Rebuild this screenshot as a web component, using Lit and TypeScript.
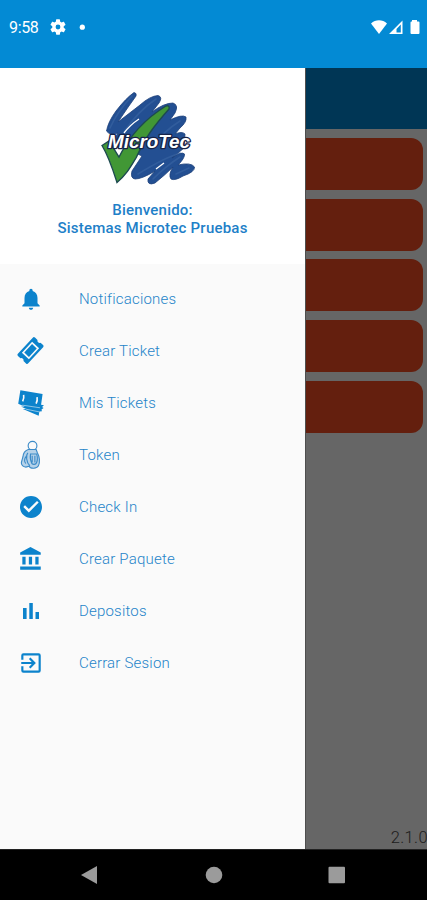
import { LitElement, html, css, svg } from "lit";
import { customElement } from "lit/decorators.js";

const icons = {
  bell: svg`<path d="M12 22c1.100 0 2-.9 2-2h-4c0 1.100.9 2 2 2zm6-6v-5c0-3.070-1.640-5.640-4.500-6.320V4c0-.83-.67-1.500-1.500-1.500s-1.500.67-1.500 1.500v.68C7.630 5.360 6 7.920 6 11v5l-2 2v1h16v-1l-2-2z"/>`,
  ticket: svg`<g transform="rotate(-47 12 12)"><path fill-rule="evenodd" d="M1.500 5.200h21a1.500 1.500 0 0 1 1.500 1.500V10a2.200 2.200 0 0 0 0 4v3.300a1.500 1.500 0 0 1-1.500 1.500h-21A1.500 1.500 0 0 1 0 17.300V14a2.200 2.200 0 0 0 0-4V6.700a1.500 1.500 0 0 1 1.500-1.500zM4.800 7.400v9.200h14.400V7.400z"/><path d="M6.500 8.900h11v6.200h-11z"/></g>`,
  tickets: svg`<path d="M2.200.3 22.700 3.600 21.300 13.600l2.700.4-1.800 1.700 1.400.9-1.900 1.400.4 1.600-2.400.2-.6 4L4.500 17.500l3 .1-4.700-2.300 3.500.1L.2 12.800z"/><path d="M5.200 4.500Q5.800 7.500 4.300 10.500M17.600 6.500Q18.200 9.500 16.700 12.500" fill="none" stroke="#fafafa" stroke-width="1.500"/><path d="M4 14 20.300 16.400M7 17.600l12.500 2.600" fill="none" stroke="#fafafa" stroke-width=".5"/>`,
  token: svg`<g fill="none" stroke="#3c8bc8" stroke-width="1"><circle cx="13.800" cy="4.200" r="3.900"/><path d="M10 7.500C7 8.500 5.500 11 5.300 14L3.900 19c-.3 2.400 1.500 4 4 4.200l2.900-.8c1 2.500 7 2.400 8.300-.5 1.400-3 1.100-8-1-11.500L17 7.500z" fill="#b5d2e9"/><path d="M9.700 10.500c-2 2-1.500 8.500 1.700 11.500M8.300 13.500c-2 2.200-2 5.500-.4 6.500M12 11.500h5.500c.8 3.200.8 6.500-.5 8.500-1 1-2.800 1-3.800 0-1.400-2.600-1.600-5.800-1.200-8.500zM13.500 13v6m2.400-6v6"/></g>`,
  check: svg`<path d="M12 1C5.900 1 1 5.900 1 12s4.900 11 11 11 11-4.900 11-11S18.100 1 12 1zm-2.200 16.500-5.500-5.500 1.700-1.700 3.800 3.800 8.200-8.200 1.700 1.700z"/>`,
  bank: svg`<path d="M4 10v7h3v-7H4zm6 0v7h3v-7h-3zM2 22h19v-3H2v3zm14-12v7h3v-7h-3zm-4.500-9L2 6v2h19V6l-9.500-5z"/>`,
  bars: svg`<path d="M4 9h3.600v11H4zm6.300-5h3.500v16h-3.500zm6.200 9H20v7h-3.500z"/>`,
  exit: svg`<path d="M10.090 15.590 11.500 17l5-5-5-5-1.410 1.410L12.670 11H3v2h9.670l-2.580 2.590zM19 3H5a2 2 0 0 0-2 2v4h2V5h14v14H5v-4H3v4a2 2 0 0 0 2 2h14a2 2 0 0 0 2-2V5a2 2 0 0 0-2-2z"/>`,
};

const menu = [
  { label: "Notificaciones", icon: icons.bell, size: 26 },
  { label: "Crear Ticket", icon: icons.ticket, size: 25 },
  { label: "Mis Tickets", icon: icons.tickets, size: 26 },
  { label: "Token", icon: icons.token, size: 27 },
  { label: "Check In", icon: icons.check, size: 24 },
  { label: "Crear Paquete", icon: icons.bank, size: 26 },
  { label: "Depositos", icon: icons.bars, size: 24 },
  { label: "Cerrar Sesion", icon: icons.exit, size: 26 },
];

@customElement("app-logo")
class AppLogo extends LitElement {
  static styles = css`
    :host { display: block; width: 120px; height: 105px; }
    svg { display: block; }
    .word { font: italic 900 18px "Liberation Sans", Arial, sans-serif; }
  `;
  render() {
    return html`<svg width="120" height="105" viewBox="0 0 120 105">
      <path fill="#234f92" stroke="#1c3f78" stroke-width=".8" stroke-linejoin="round"
        d="M44 7.500Q47 8 46 11Q38 22 28 37L50 20Q60 11 68 10.500Q73 12 69 18L62 27Q74 18 83 18Q89 20 85 28L80 35Q92 29 96 32Q97 37 90 43L85 49Q92 46 95 49L94 63 82 73Q91 66 94.500 69Q95 73 88 80Q101 77 104.500 82Q105 87 93 91Q85 96 81 94Q78 90 83 82Q75 90 65 98Q57 101 58 94L65 86Q52 94 45 94Q40 93 42 86L52 71 22 57 28 48Q20 51 16.500 46Q18 37 26 26Q36 13 44 7.500Z"/>
      <g fill="none" stroke="#3a66a3" stroke-width="1.600" stroke-linecap="round" opacity=".6">
        <path d="M42 11Q27 27 20 43M66 14Q48 26 34 47M79 22Q58 36 43 56M90 36Q74 46 62 62M90 68Q74 73 48 89M90 72Q76 81 63 94M99 83 86 89"/>
      </g>
      <path fill="none" stroke="#fff" stroke-width="1.300" d="M34 48Q40 40 49 34M66 84 74 78"/>
      <path d="M12 60.500 19 56 29 72C39 52 53 35 76 21Q80 20 79 24C64 41 54 54 46 73 40 83 36 90 27 97.500C23 85 19 72 12 60.500Z" fill="#419735" stroke="#1d4a50" stroke-width="1.400"/>
      <text class="word" x="18" y="62.500" textLength="82" lengthAdjust="spacingAndGlyphs"
        fill="#fff" stroke="#182347" stroke-width="2.600" paint-order="stroke" stroke-linejoin="round">MicroTec</text>
    </svg>`;
  }
}

@customElement("app-root")
class AppRoot extends LitElement {
  static styles = css`
    * { box-sizing: border-box; }
    :host {
      display: flex; flex-direction: column; width: 427px; height: 900px;
      overflow: hidden; font-family: Roboto, sans-serif; background: #666;
    }
    .status {
      height: 68px; flex: none; background: #038ad4; color: #fff;
      display: flex; align-items: flex-start; padding: 18px 7px 0 9px;
    }
    .time { font-size: 16px; line-height: 20px; width: 41px; letter-spacing: -.35px; }
    .status svg { display: block; }
    .push { margin-left: auto; }
    .body { display: flex; height: 781px; flex: none; }
    .drawer { width: 305px; background: #fafafa; flex: none; }
    .profile {
      height: 196px; background: #fff; display: flex; flex-direction: column;
      align-items: center; padding-top: 17px; color: #1e80c8;
    }
    .profile app-logo { margin-right: 5px; }
    .welcome {
      font-size: 15px; line-height: 18px; font-weight: 500; text-align: center;
      letter-spacing: .22px; margin-top: 11px; white-space: nowrap;
    }
    .menu { padding-top: 9px; }
    .item {
      height: 52.060px; display: flex; align-items: center; color: #2584c9;
      font-size: 15px; font-weight: 300; letter-spacing: .2px;
    }
    .icon { width: 61px; display: flex; justify-content: center; margin-right: 18px; padding-bottom: 1px; }
    .icon svg { fill: #0c83cc; display: block; overflow: visible; }
    .page {
      flex: 1; display: flex; flex-direction: column; background: #666;
      border-left: 1px solid #4e4e4e; min-width: 0;
    }
    .bar { height: 61px; background: #003655; flex: none; }
    .cards { padding: 9px 4px 0 0; display: flex; flex-direction: column; gap: 8.700px; }
    .card { height: 52px; background: #641f0e; border-radius: 0 12px 12px 0; }
    .version {
      margin-top: auto; align-self: flex-end; font-size: 16.500px; line-height: 20px;
      font-weight: 300; color: #1c1c1c; padding-bottom: 1px; letter-spacing: .4px; margin-right: -1px;
    }
    .nav {
      flex: 1; background: #000; display: flex; align-items: center;
      padding-left: 81px; border-top: 1px solid #222;
    }
    .nav svg { display: block; fill: #9b9b9b; }
  `;

  render() {
    return html`
      <div class="status">
        <span class="time">9:58</span>
        <svg width="16" height="18" viewBox="2 1.500 20 21" fill="#fff"><path fill-rule="evenodd" d="M19.140 12.940a7 7 0 0 0 0-1.880l2.030-1.580a.5.5 0 0 0 .12-.61l-1.920-3.320a.5.5 0 0 0-.59-.22l-2.390.96a7 7 0 0 0-1.620-.94l-.36-2.540A.5.5 0 0 0 13.930 2.400h-3.840a.5.500 0 0 0-.47.410l-.36 2.540a7 7 0 0 0-1.620.94l-2.390-.96a.5.5 0 0 0-.59.220L2.740 8.870a.5.5 0 0 0 .12.610l2.030 1.580a7 7 0 0 0 0 1.880l-2.030 1.580a.5.5 0 0 0-.12.610l1.920 3.320c.12.220.37.290.59.220l2.390-.96c.5.380 1.030.7 1.620.94l.36 2.540c.05.240.24.410.48.410h3.840c.24 0 .44-.17.470-.41l.36-2.540a7 7 0 0 0 1.620-.94l2.390.96c.22.080.47 0 .59-.22l1.920-3.320a.5.5 0 0 0-.12-.61zM12 15a3 3 0 1 1 0-6 3 3 0 0 1 0 6z"/></svg>
        <svg width="20" height="18"><circle cx="16.300" cy="9.200" r="2.600" fill="#fff"/></svg>
        <svg class="push" width="50" height="18" fill="#fff">
          <path d="M1 5.500C5.500 1.200 12.500 1.200 17 5.500L9 16z"/>
          <path fill-rule="evenodd" d="M32.500 2.500V16H19zM30.800 6.500 26.500 11v3.500h4.300z"/>
          <path d="M42 2h5v1.500h1.500q1 0 1 1V15q0 1-1 1h-7q-1 0-1-1V4.500q0-1 1-1h.5z"/>
        </svg>
      </div>
      <div class="body">
        <div class="drawer">
          <div class="profile">
            <app-logo></app-logo>
            <div class="welcome">Bienvenido:<br />Sistemas Microtec Pruebas</div>
          </div>
          <div class="menu">
            ${menu.map(
              (m) => html`<div class="item">
                <span class="icon"><svg width=${m.size} height=${m.size} viewBox="0 0 24 24">${m.icon}</svg></span>
                <span>${m.label}</span>
              </div>`
            )}
          </div>
        </div>
        <div class="page">
          <div class="bar"></div>
          <div class="cards">${[0, 1, 2, 3, 4].map(() => html`<div class="card"></div>`)}</div>
          <div class="version">2.1.0</div>
        </div>
      </div>
      <div class="nav">
        <svg width="264" height="20">
          <path d="M0 10 16 1V19z"/>
          <circle cx="133" cy="10" r="8.300"/>
          <rect x="247.500" y="1.700" width="16.500" height="16.600" rx="1"/>
        </svg>
      </div>
    `;
  }
}
